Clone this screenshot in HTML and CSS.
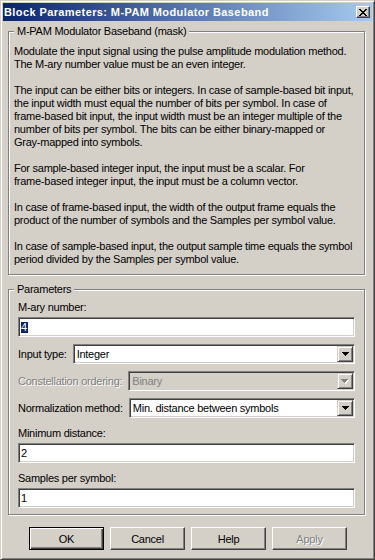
FILE: index.html
```html
<!DOCTYPE html>
<html>
<head>
  <title>Block Parameters: M-PAM Modulator Baseband</title>
  <link rel="stylesheet" href="styles.css">
</head>
<body>
  <div class="window">
    <div class="titlebar">
      <span class="title">Block Parameters: M-PAM Modulator Baseband</span>
      <span class="close-btn">
        <svg width="8" height="7" viewBox="0 0 8 7" shape-rendering="crispEdges">
          <path d="M0 0h2v1h1v1h2v-1h1v-1h2v1h-1v1h-1v1h-1v1h1v1h1v1h1v1h-2v-1h-1v-1h-2v1h-1v1h-2v-1h1v-1h1v-1h1v-1h-1v-1h-1v-1h-1z" fill="#000"/>
        </svg>
      </span>
    </div>

    <div class="content">
      <fieldset class="group desc">
        <legend>M-PAM Modulator Baseband (mask)</legend>
        <p>Modulate the input signal using the pulse amplitude modulation method.<br>
          The M-ary number value must be an even integer.</p>
        <p>The input can be either bits or integers. In case of sample-based bit input,<br>
          the input width must equal the number of bits per symbol. In case of<br>
          frame-based bit input, the input width must be an integer multiple of the<br>
          number of bits per symbol. The bits can be either binary-mapped or<br>
          Gray-mapped into symbols.</p>
        <p>For sample-based integer input, the input must be a scalar. For<br>
          frame-based integer input, the input must be a column vector.</p>
        <p>In case of frame-based input, the width of the output frame equals the<br>
          product of the number of symbols and the Samples per symbol value.</p>
        <p>In case of sample-based input, the output sample time equals the symbol<br>
          period divided by the Samples per symbol value.</p>
      </fieldset>

      <fieldset class="group params">
        <legend>Parameters</legend>

        <div class="label">M-ary number:</div>
        <div class="edit"><span class="sel">4</span></div>

        <div class="row">
          <span class="row-label">Input type:</span>
          <div class="combo">
            <span class="combo-text">Integer</span>
            <span class="drop-btn"><svg width="7" height="4" viewBox="0 0 7 4" shape-rendering="crispEdges"><path d="M0 0h7v1h-1v1h-1v1h-1v1h-1v-1h-1v-1h-1v-1h-1z" fill="#000"/></svg></span>
          </div>
        </div>

        <div class="row">
          <span class="row-label disabled">Constellation ordering:</span>
          <div class="combo off">
            <span class="combo-text">Binary</span>
            <span class="drop-btn"><svg width="8" height="5" viewBox="0 0 8 5" shape-rendering="crispEdges"><path d="M1 1h7v1h-1v1h-1v1h-1v1h-1v-1h-1v-1h-1v-1h-1z" fill="#fff"/><path d="M0 0h7v1h-1v1h-1v1h-1v1h-1v-1h-1v-1h-1v-1h-1z" fill="#808080"/></svg></span>
          </div>
        </div>

        <div class="row">
          <span class="row-label">Normalization method:</span>
          <div class="combo">
            <span class="combo-text">Min. distance between symbols</span>
            <span class="drop-btn"><svg width="7" height="4" viewBox="0 0 7 4" shape-rendering="crispEdges"><path d="M0 0h7v1h-1v1h-1v1h-1v1h-1v-1h-1v-1h-1v-1h-1z" fill="#000"/></svg></span>
          </div>
        </div>

        <div class="label">Minimum distance:</div>
        <div class="edit"><span class="val">2</span></div>

        <div class="label">Samples per symbol:</div>
        <div class="edit"><span class="val">1</span></div>
      </fieldset>

      <div class="buttons">
        <button class="btn default">OK</button>
        <button class="btn">Cancel</button>
        <button class="btn">Help</button>
        <button class="btn disabled" disabled>Apply</button>
      </div>
    </div>
  </div>
</body>
</html>
```

FILE: styles.css
```css
* { box-sizing: border-box; }
body {
  margin: 0;
  background: #d4d0c8;
  font-family: "Liberation Sans", Arial, sans-serif;
  font-size: 11px;
  letter-spacing: -0.25px;
  color: #000;
}

/* window frame */
.window {
  width: 375px;
  height: 560px;
  padding: 2px;
  background: #d4d0c8;
  border: 1px solid;
  border-color: #d4d0c8 #404040 #404040 #d4d0c8;
  box-shadow: inset 1px 1px #fff, inset -1px -1px #808080;
  display: flex;
  flex-direction: column;
}
.titlebar {
  height: 18px;
  padding: 0 2px 0 1px;
  display: flex;
  align-items: center;
  justify-content: space-between;
  background: linear-gradient(to right, #0a246a, #a6caf0);
}
.title {
  color: #fff;
  font-weight: bold;
  letter-spacing: 0.4px;
  white-space: nowrap;
}
.close-btn {
  width: 14px;
  height: 12px;
  display: flex;
  align-items: center;
  justify-content: center;
  background: #d4d0c8;
  border: 1px solid;
  border-color: #fff #404040 #404040 #fff;
  box-shadow: inset -1px -1px #808080;
}

.content { padding: 0 7px 0 5px; }

/* group boxes */
.group {
  margin: 0;
  border: 1px solid #808080;
  box-shadow: 1px 1px 0 #fff, inset 1px 1px 0 #fff;
}
.group legend {
  padding: 0 3px;
  line-height: 13px;
  background: #d4d0c8;
}
.desc { margin-top: 4px; padding: 7px 5px 8px; }
.desc p { margin: 0 0 13px; line-height: 13px; white-space: nowrap; }
.desc p:last-child { margin-bottom: 0; }

.params { margin-top: 8px; padding: 5px 9px 6px; }
.params legend { margin-left: -4px; }

.label { line-height: 13px; height: 13px; }
.edit + .label, .row + .label { margin-top: 9px; }

/* sunken fields */
.edit, .combo {
  height: 20px;
  padding: 1px;
  background: #fff;
  border: 1px solid;
  border-color: #808080 #fff #fff #808080;
  box-shadow: inset 1px 1px #404040, inset -1px -1px #d4d0c8;
  display: flex;
  align-items: center;
}
.edit { margin-top: 3px; }
.edit .val { padding-left: 1px; }
.sel {
  margin-left: 1px;
  padding: 0 1px 0 0;
  line-height: 11px;
  background: #0a246a;
  color: #fff;
}

.row { margin-top: 7px; display: flex; align-items: center; gap: 6px; }
.row-label { white-space: nowrap; }
.combo { flex: 1; }
.combo-text { flex: 1; padding-left: 2px; line-height: 16px; }
.drop-btn {
  width: 16px;
  height: 16px;
  display: flex;
  align-items: center;
  justify-content: center;
  background: #d4d0c8;
  border: 1px solid;
  border-color: #d4d0c8 #404040 #404040 #d4d0c8;
  box-shadow: inset 1px 1px #fff, inset -1px -1px #808080;
}
.combo.off { background: #d4d0c8; }
.combo.off .combo-text { color: #808080; }

.disabled { color: #808080; text-shadow: 1px 1px 0 #fff; }

/* dialog buttons */
.buttons { margin-top: 12px; padding-left: 21px; display: flex; gap: 6px; }
.btn {
  width: 75px;
  height: 23px;
  padding: 0;
  font: inherit;
  letter-spacing: inherit;
  color: #000;
  background: #d4d0c8;
  border: 1px solid;
  border-color: #fff #404040 #404040 #fff;
  box-shadow: inset -1px -1px #808080;
}
.btn.default {
  border-color: #000;
  box-shadow: inset 1px 1px #fff, inset -1px -1px #404040, inset -2px -2px #808080;
}
.btn.disabled { color: #808080; text-shadow: 1px 1px 0 #fff; }
```
